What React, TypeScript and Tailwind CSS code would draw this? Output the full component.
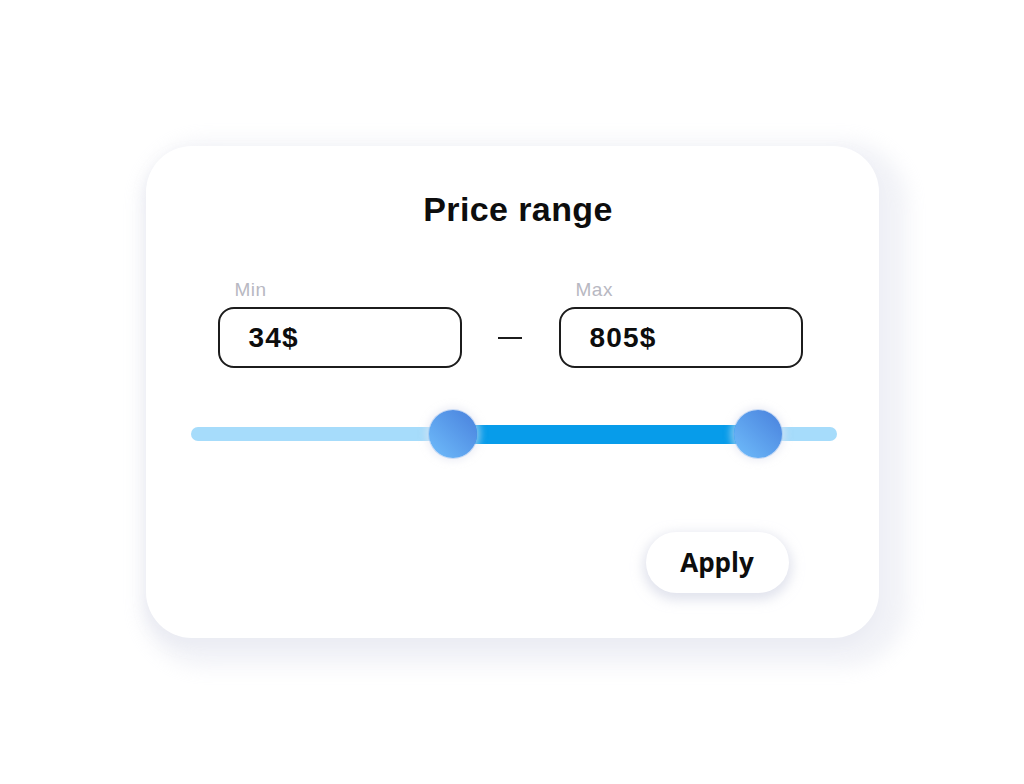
import { useState } from 'react';

const TRACK_WIDTH = 646;

function PriceInput({ label, value }: { label: string; value: string }) {
  return (
    <div className="flex flex-col">
      <span className="pl-[17px] text-[19px] leading-[22px] text-[#b8b8c2] font-['Liberation_Sans',Arial,sans-serif] tracking-[0.5px]">
        {label}
      </span>
      <div className="mt-[6px] flex h-[61px] w-[244px] items-center rounded-[16px] border-[2px] border-[#1c1c1c] pl-[29px]">
        <span className="text-[28px] font-bold text-[#0d0d0d] font-['Liberation_Sans',Arial,sans-serif] tracking-[1.2px]">
          {value}
        </span>
      </div>
    </div>
  );
}

function Thumb({ x }: { x: number }) {
  return (
    <div
      className="absolute top-0 h-[48px] w-[48px] -translate-x-1/2 rounded-full bg-linear-to-bl from-[#4980dc] to-[#70bdfb] shadow-[0_0_0_1px_rgba(120,170,235,0.35),0_0_6px_4px_rgba(228,230,242,0.5)]"
      style={{ left: x }}
    />
  );
}

function RangeSlider({ from, to }: { from: number; to: number }) {
  return (
    <div className="relative h-[48px]" style={{ width: TRACK_WIDTH }}>
      <div className="absolute left-0 right-0 top-[17px] h-[14px] rounded-full bg-[#a6dcfb]" />
      <div
        className="absolute top-[15px] h-[19px] bg-[#079cea]"
        style={{ left: from, width: to - from }}
      />
      <Thumb x={from} />
      <Thumb x={to} />
    </div>
  );
}

export default function App() {
  const [range] = useState({ min: 34, max: 805 });

  return (
    <div className="flex h-[784px] w-full items-center justify-center bg-white">
      <div className="flex h-[492px] w-[733px] flex-col rounded-[46px] bg-white shadow-[12px_12px_20px_16px_rgba(236,237,244,0.75),0_8px_12px_rgba(205,208,224,0.5)]">
        <h1 className="mt-[43px] pl-[12px] text-center text-[34px] font-bold leading-[40px] tracking-[0.4px] text-[#0d0d0d] font-['Liberation_Sans',Arial,sans-serif]">
          Price range
        </h1>

        <div className="ml-[72px] mt-[50px] flex items-end">
          <PriceInput label="Min" value={`${range.min}$`} />
          <div className="flex h-[61px] w-[97px] items-center justify-center">
            <div className="h-[2px] w-[24px] bg-[#1c1c1c]" />
          </div>
          <PriceInput label="Max" value={`${range.max}$`} />
        </div>

        <div className="ml-[45px] mt-[42px]">
          <RangeSlider from={262} to={567} />
        </div>

        <button className="mr-[90px] mt-[74px] h-[61px] w-[143px] self-end rounded-full bg-white text-[26px] font-bold text-[#0d0d0d] font-['Open_Sans',sans-serif] shadow-[0_4px_12px_3px_rgba(205,208,225,0.6)]">
          Apply
        </button>
      </div>
    </div>
  );
}
